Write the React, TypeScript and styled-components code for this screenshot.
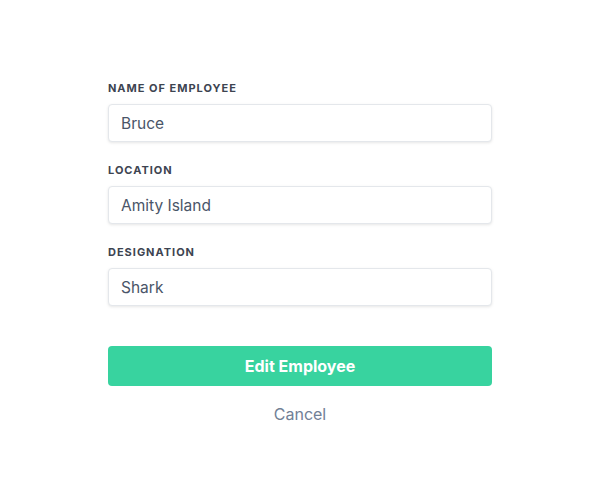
import React, { useState } from 'react';
import styled, { createGlobalStyle } from 'styled-components';

const GlobalStyle = createGlobalStyle`
  body {
    margin: 0;
    background: #ffffff;
    font-family: Inter, "Noto Sans", "Liberation Sans", sans-serif;
  }
`;

const Page = styled.div`
  width: 600px;
  height: 500px;
  display: flex;
  justify-content: center;
  padding-top: 80px;
  box-sizing: border-box;
`;

const Form = styled.form`
  width: 384px;
  display: flex;
  flex-direction: column;
`;

const Field = styled.div`
  display: flex;
  flex-direction: column;
  margin-bottom: 20px;
`;

const Label = styled.label`
  font-size: 11px;
  font-weight: 700;
  letter-spacing: 0.09em;
  text-transform: uppercase;
  color: #3d4451;
  line-height: 16px;
  margin-bottom: 8px;
`;

const Input = styled.input`
  box-sizing: border-box;
  width: 100%;
  height: 38px;
  padding: 0 12px;
  border: 1px solid #e4e7eb;
  border-radius: 4px;
  box-shadow: 0 1px 3px rgba(0, 0, 0, 0.1);
  font-family: inherit;
  font-size: 15.5px;
  color: #4a5568;
  outline: none;
`;

const Button = styled.button`
  margin-top: 20px;
  height: 40px;
  border: none;
  border-radius: 4px;
  background: #38d39f;
  color: #ffffff;
  font-family: inherit;
  font-size: 16px;
  font-weight: 700;
  cursor: pointer;
`;

const CancelLink = styled.button`
  margin-top: 17px;
  align-self: center;
  border: none;
  background: none;
  font-family: inherit;
  font-size: 16px;
  color: #718096;
  cursor: pointer;
`;

const App: React.FC = () => {
  const [name, setName] = useState('Bruce');
  const [location, setLocation] = useState('Amity Island');
  const [designation, setDesignation] = useState('Shark');

  return (
    <Page>
      <GlobalStyle />
      <Form onSubmit={(e) => e.preventDefault()}>
        <Field>
          <Label>Name of employee</Label>
          <Input value={name} onChange={(e) => setName(e.target.value)} />
        </Field>
        <Field>
          <Label>Location</Label>
          <Input value={location} onChange={(e) => setLocation(e.target.value)} />
        </Field>
        <Field>
          <Label>Designation</Label>
          <Input value={designation} onChange={(e) => setDesignation(e.target.value)} />
        </Field>
        <Button type="submit">Edit Employee</Button>
        <CancelLink type="button">Cancel</CancelLink>
      </Form>
    </Page>
  );
};

export default App;
